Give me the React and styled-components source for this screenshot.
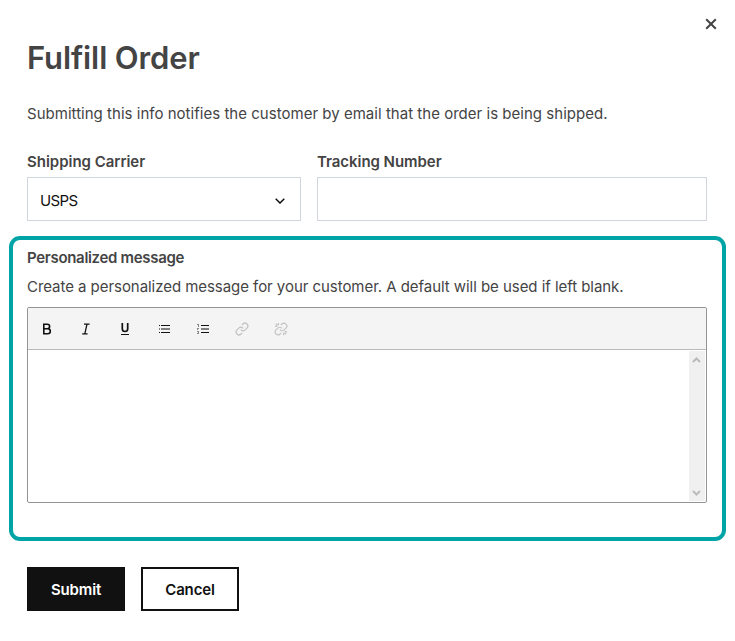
import styled, { createGlobalStyle } from 'styled-components';

export default function App() {
  return (
    <>
      <GlobalStyle />
      <Modal>
        <CloseButton type="button" aria-label="Close">
          <svg width="12" height="12" viewBox="0 0 12 12">
            <path d="M1.2 1.2l9.6 9.6M10.8 1.2l-9.6 9.6" fill="none" stroke="#444" strokeWidth="2" />
          </svg>
        </CloseButton>
        <Title>Fulfill Order</Title>
        <Intro>Submitting this info notifies the customer by email that the order is being shipped.</Intro>
        <FieldRow>
          <Field>
            <Label $spacing="-0.02px">Shipping Carrier</Label>
            <SelectBox type="button">
              USPS
              <svg width="10" height="6" viewBox="0 0 10 6">
                <path d="M.7.7L5 5 9.3.7" fill="none" stroke="#111" strokeWidth="1.5" />
              </svg>
            </SelectBox>
          </Field>
          <Field>
            <Label htmlFor="tracking" $spacing="-0.05px">Tracking Number</Label>
            <TextInput id="tracking" type="text" />
          </Field>
        </FieldRow>
        <MessageSection>
          <Label $spacing="-0.31px">Personalized message</Label>
          <Hint>Create a personalized message for your customer. A default will be used if left blank.</Hint>
          <Editor>
            <Toolbar>
              <ToolButton type="button" aria-label="Bold">
                <BoldIcon />
              </ToolButton>
              <ToolButton type="button" aria-label="Italic">
                <ItalicIcon />
              </ToolButton>
              <ToolButton type="button" aria-label="Underline">
                <UnderlineIcon />
              </ToolButton>
              <ToolButton type="button" aria-label="Bulleted list">
                <BulletListIcon />
              </ToolButton>
              <ToolButton type="button" aria-label="Numbered list">
                <NumberListIcon />
              </ToolButton>
              <ToolButton type="button" aria-label="Link" disabled>
                <LinkIcon />
              </ToolButton>
              <ToolButton type="button" aria-label="Unlink" disabled>
                <UnlinkIcon />
              </ToolButton>
            </Toolbar>
            <EditorBody>
              <Scrollbar>
                <svg width="9" height="6" viewBox="0 0 9 6">
                  <path d="M1 5l3.5-3.5L8 5" fill="none" stroke="#bbb" strokeWidth="2" />
                </svg>
                <svg width="9" height="6" viewBox="0 0 9 6">
                  <path d="M1 1l3.5 3.5L8 1" fill="none" stroke="#bbb" strokeWidth="2" />
                </svg>
              </Scrollbar>
            </EditorBody>
          </Editor>
        </MessageSection>
        <Actions>
          <ActionButton type="button" $primary>Submit</ActionButton>
          <ActionButton type="button">Cancel</ActionButton>
        </Actions>
      </Modal>
    </>
  );
}

function BoldIcon() {
  return (
    <svg width="14" height="14" viewBox="0 0 14 14" fill="none" stroke="currentColor" strokeWidth="1.6">
      <path d="M3.8 2.3h3.6a2.2 2.2 0 0 1 0 4.4H3.8zM3.8 6.7h4a2.5 2.5 0 0 1 0 5h-4z" />
    </svg>
  );
}

function ItalicIcon() {
  return (
    <svg width="14" height="14" viewBox="0 0 14 14" fill="none" stroke="currentColor" strokeWidth="1.3">
      <path d="M5 2.2h5.6M3.2 11.8h5.4M8 2.2L5.8 11.8" />
    </svg>
  );
}

function UnderlineIcon() {
  return (
    <svg width="14" height="14" viewBox="0 0 14 14" fill="none" stroke="currentColor" strokeWidth="1.7">
      <path d="M4.3 1v5.8a2.7 2.7 0 0 0 5.4 0V1" />
      <path d="M3 12.5h8" strokeWidth="1" />
    </svg>
  );
}

function BulletListIcon() {
  return (
    <svg width="14" height="14" viewBox="0 0 14 14" shapeRendering="crispEdges">
      <path d="M2 3h1v1H2zM4 3h9v1H4zM2 10h1v1H2zM4 10h9v1H4z" fill="#111" />
      <path d="M2 6h1v2H2zM4 6h9v2H4z" fill="#808080" />
    </svg>
  );
}

function NumberListIcon() {
  return (
    <svg width="14" height="14" viewBox="0 0 14 14" shapeRendering="crispEdges">
      <path d="M5 3h8v1H5zM5 10h8v1H5z" fill="#111" />
      <path d="M5 6h8v2H5z" fill="#808080" />
      <path d="M1 2h2v3H2V3H1zM1 6h2v1H2v1H1zM1 9h2v3H1v-1h1v-1H1z" fill="#888" />
    </svg>
  );
}

const chain = (
  <g>
    <path d="M10 13a5 5 0 0 0 7.54.54l3-3a5 5 0 0 0-7.07-7.07l-1.72 1.71" />
    <path d="M14 11a5 5 0 0 0-7.54-.54l-3 3a5 5 0 0 0 7.07 7.07l1.71-1.71" />
  </g>
);

function LinkIcon() {
  return (
    <svg width="14" height="14" viewBox="0 0 24 24" fill="none" stroke="#c4c4c4" strokeWidth="2.2">
      {chain}
    </svg>
  );
}

function UnlinkIcon() {
  return (
    <svg width="14" height="14" viewBox="0 0 24 24" fill="none" stroke="#c4c4c4" strokeWidth="2.1">
      {chain}
      <path d="M7.5 1.5v4M1.5 7.5h4M3 3l3 3M16.5 18.5v4M18.5 16.5h4M18 18l3 3" />
    </svg>
  );
}

const GlobalStyle = createGlobalStyle`
  * {
    box-sizing: border-box;
  }

  body {
    margin: 0;
    background: #fff;
    color: #444;
    font-family: Inter, "Liberation Sans", sans-serif;
    font-size: 15px;
  }

  button, input {
    font: inherit;
  }
`;

const Modal = styled.main`
  display: flex;
  flex-direction: column;
  width: 735px;
  height: 641px;
  padding: 17px 9px 0;
`;

const CloseButton = styled.button`
  display: flex;
  align-items: center;
  justify-content: center;
  align-self: flex-end;
  width: 14px;
  height: 14px;
  margin-right: 8px;
  padding: 0;
  border: 0;
  background: none;
`;

const Title = styled.h1`
  margin: 7px 18px 0;
  font-size: 31px;
  font-weight: 600;
  line-height: 40px;
  letter-spacing: -0.1px;
`;

const Intro = styled.p`
  margin: 24px 18px 0;
  line-height: 24px;
  letter-spacing: 0.025px;
  white-space: nowrap;
`;

const FieldRow = styled.div`
  display: grid;
  grid-template-columns: 274px 390px;
  gap: 16px;
  margin: 24px 18px 0;
`;

const Field = styled.div`
  display: flex;
  flex-direction: column;
`;

const Label = styled.label`
  display: block;
  font-weight: 600;
  line-height: 24px;
  letter-spacing: ${({ $spacing }) => $spacing || '0'};
`;

const SelectBox = styled.button`
  display: flex;
  align-items: center;
  justify-content: space-between;
  height: 44px;
  margin-top: 3px;
  padding: 3px 15px 0 12px;
  border: 1px solid #d0d6dc;
  background: #fff;
  color: #111;
  letter-spacing: -0.6px;
`;

const TextInput = styled.input`
  height: 44px;
  margin-top: 3px;
  padding: 0 12px;
  border: 1px solid #d0d6dc;
  background: #fff;
`;

const MessageSection = styled.section`
  width: 717px;
  height: 305px;
  margin-top: 15px;
  padding: 6px 14px 0;
  border: 4px solid #00a4a6;
  border-radius: 11px;
`;

const Hint = styled.p`
  margin: 5px 0 8px;
  line-height: 24px;
  letter-spacing: -0.05px;
  white-space: nowrap;
`;

const Editor = styled.div`
  width: 680px;
  height: 196px;
  border: 1px solid #949494;
  border-radius: 2px;
  overflow: hidden;
`;

const Toolbar = styled.div`
  display: flex;
  gap: 25px;
  height: 42px;
  padding: 14px 12px;
  border-bottom: 1px solid #b9b9b9;
  background: #f4f4f4;
`;

const ToolButton = styled.button`
  display: flex;
  width: 14px;
  height: 14px;
  padding: 0;
  border: 0;
  background: none;
  color: #111;
`;

const EditorBody = styled.div`
  display: flex;
  justify-content: flex-end;
  height: 152px;
  padding: 1px;
`;

const Scrollbar = styled.div`
  display: flex;
  flex-direction: column;
  align-items: flex-start;
  justify-content: space-between;
  width: 16px;
  padding: 6px 3px 5px;
  background: #f0f0f0;
`;

const Actions = styled.div`
  display: flex;
  gap: 16px;
  margin: 26px 18px 0;
`;

const ActionButton = styled.button`
  width: 98px;
  height: 44px;
  padding: 0;
  border: 2px solid #111;
  background: ${({ $primary }) => ($primary ? '#111' : '#fff')};
  color: ${({ $primary }) => ($primary ? '#fff' : '#111')};
  font-weight: 600;
  letter-spacing: -0.15px;
`;
